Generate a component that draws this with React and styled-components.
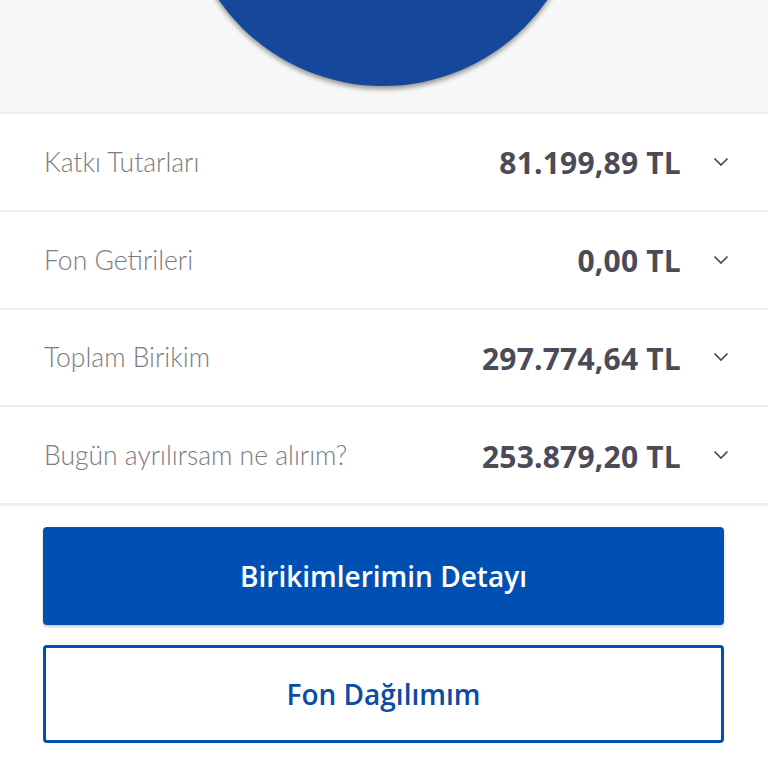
import React from "react";
import styled, { createGlobalStyle } from "styled-components";

const rows = [
  { label: "Katkı Tutarları", value: "81.199,89 TL" },
  { label: "Fon Getirileri", value: "0,00 TL" },
  { label: "Toplam Birikim", value: "297.774,64 TL" },
  { label: "Bugün ayrılırsam ne alırım?", value: "253.879,20 TL" },
];

const Chevron = () => (
  <svg width="16" height="10" viewBox="0 0 16 10" fill="none">
    <path d="M1.5 1.5 L8 8 L14.5 1.5" stroke="#4a4a55" strokeWidth="1.7" />
  </svg>
);

export default function App() {
  return (
    <>
      <GlobalStyle />
      <Page>
        <Header>
          <Circle />
        </Header>
        <List>
          {rows.map((r) => (
            <Row key={r.label}>
              <Label>{r.label}</Label>
              <Value>{r.value}</Value>
              <ChevronBox>
                <Chevron />
              </ChevronBox>
            </Row>
          ))}
        </List>
        <Actions>
          <PrimaryButton>Birikimlerimin Detayı</PrimaryButton>
          <OutlineButton>Fon Dağılımım</OutlineButton>
        </Actions>
      </Page>
    </>
  );
}

const GlobalStyle = createGlobalStyle`
  html, body {
    margin: 0;
    padding: 0;
    background: #ffffff;
  }
  body {
    font-family: "Lato", "Open Sans", sans-serif;
  }
`;

const Page = styled.div`
  width: 768px;
  height: 768px;
  overflow: hidden;
  background: #ffffff;
`;

const Header = styled.section`
  position: relative;
  height: 112px;
  background: #f7f7f7;
  overflow: hidden;
`;

const Circle = styled.div`
  position: absolute;
  left: 183px;
  top: -314px;
  width: 400px;
  height: 400px;
  border-radius: 50%;
  background: #16479b;
  box-shadow: 0 3px 5px rgba(0, 0, 0, 0.4);
`;

const List = styled.section`
  border-top: 2px solid #ececec;
  box-shadow: 0 2px 3px rgba(0, 0, 0, 0.04);
`;

const Row = styled.div`
  display: flex;
  align-items: center;
  height: 95.75px;
  padding: 0 39px 0 44px;
  border-bottom: 2px solid #ececec;
`;

const Label = styled.span`
  flex: 1;
  font-family: "Lato", sans-serif;
  font-weight: 300;
  font-size: 26.5px;
  color: #7b7b82;
`;

const Value = styled.span`
  font-family: "Open Sans", sans-serif;
  font-weight: 700;
  font-size: 30px;
  letter-spacing: 0.2px;
  color: #4b4a57;
  margin-top: 2px;
`;

const ChevronBox = styled.span`
  display: flex;
  width: 16px;
  margin-left: 32px;
`;

const Actions = styled.section`
  display: flex;
  flex-direction: column;
  gap: 20px;
  padding: 22px 44px 0 43px;
`;

const ButtonBase = styled.button`
  height: 98px;
  border-radius: 4px;
  font-family: "Open Sans", sans-serif;
  font-weight: 600;
  font-size: 28px;
  cursor: pointer;
`;

const PrimaryButton = styled(ButtonBase)`
  border: none;
  background: #0050b4;
  color: #ffffff;
  box-shadow: 0 2px 3px rgba(0, 0, 0, 0.2);
`;

const OutlineButton = styled(ButtonBase)`
  border: 3px solid #0050b4;
  background: #ffffff;
  color: #0a4ba3;
`;
